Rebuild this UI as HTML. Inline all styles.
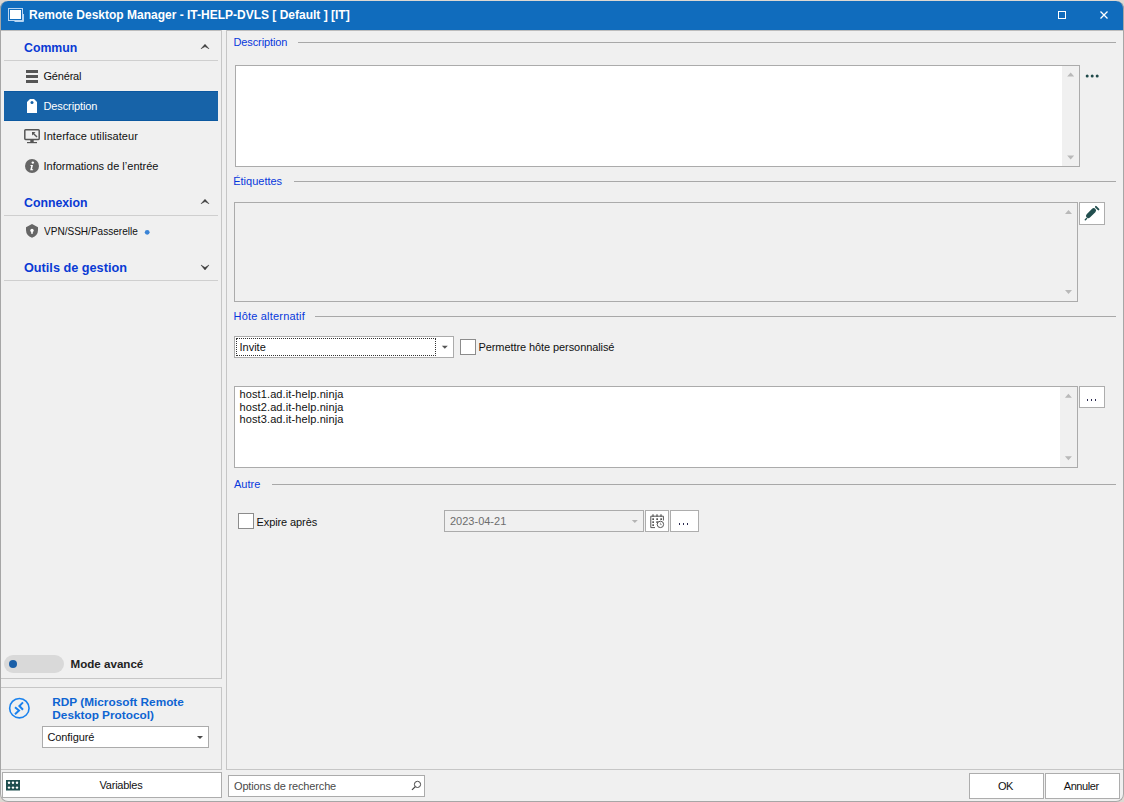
<!DOCTYPE html>
<html><head><meta charset="utf-8">
<style>
*{margin:0;padding:0;box-sizing:border-box}
html,body{width:1124px;height:802px;overflow:hidden;background:#ddd8d2;font-family:"Liberation Sans",sans-serif;font-size:11px;color:#111}
.a{position:absolute}
.t{position:absolute;white-space:pre;line-height:13px;font-size:11px}
.win{position:absolute;left:0;top:0;width:1124px;height:802px;border-radius:8px;overflow:hidden;background:#f0f0f0;clip-path:inset(1px 0 0 0 round 8px)}
.frame{position:absolute;left:0;top:1px;width:1124px;height:801px;border-radius:8px;border:1px solid #a6a6a6;border-top:none}
.hl{position:absolute;height:1px;background:#c6c6c6}
.vl{position:absolute;width:1px;background:#c6c6c6}
.box{position:absolute;border:1px solid #ababab;background:#fff}
.hdr{position:absolute;white-space:pre;font-weight:bold;font-size:12.3px;line-height:14px;color:#0a3ad4}
.sec{position:absolute;white-space:pre;line-height:13px;font-size:11px;color:#0838dc}
.sl{position:absolute;height:1px;background:#a8a8a8}
.btn{position:absolute;border:1px solid #adadad;background:#fff}
svg{position:absolute;overflow:visible}
</style></head><body>
<div class="win">
  <!-- title bar -->
  <div class="a" style="left:0;top:0;width:1124px;height:30px;background:#106cbd"></div>
  <svg style="left:0;top:0" width="40" height="30">
    <rect x="8.5" y="8.5" width="14" height="12" fill="none" stroke="#b9d6f2" stroke-width="1"/>
    <rect x="10" y="10" width="11" height="9" fill="#fff"/>
    <path d="M14.5 21.5 H23.5 V14" fill="none" stroke="#b9d6f2" stroke-width="1"/>
  </svg>
  <div class="t" style="left:29px;top:8px;font-size:12px;font-weight:bold;color:#fff;line-height:14px">Remote Desktop Manager - IT-HELP-DVLS [ Default ] [IT]</div>
  <div class="a" style="left:1058px;top:11px;width:8px;height:8px;border:1px solid #fff"></div>
  <svg style="left:0;top:0" width="1124" height="30">
    <path d="M1100.5 11.5 L1107.5 18.5 M1107.5 11.5 L1100.5 18.5" stroke="#fff" stroke-width="1.3"/>
  </svg>

  <!-- panel borders -->
  <div class="hl" style="left:0;top:30px;width:222px;background:#bdbdbd"></div>
  <div class="hl" style="left:226px;top:30px;width:898px;background:#bdbdbd"></div>
  <div class="vl" style="left:221px;top:30px;height:649px"></div>
  <div class="hl" style="left:0;top:678px;width:222px"></div>
  <div class="hl" style="left:0;top:687px;width:222px"></div>
  <div class="vl" style="left:221px;top:687px;height:83px"></div>
  <div class="hl" style="left:0;top:769px;width:222px"></div>
  <div class="vl" style="left:226px;top:30px;height:740px"></div>
  <div class="hl" style="left:226px;top:769px;width:898px"></div>

  <!-- LEFT NAV -->
  <div class="hdr" style="left:24px;top:41px">Commun</div>
  <svg style="left:0;top:0" width="222" height="300">
    <path d="M201 48.8 L205 44.3 L209 48.8 L205 46.6 Z" fill="#3a3a3a" stroke="#3a3a3a" stroke-width="0.5" stroke-linejoin="round"/>
    <path d="M201 203.8 L205 199.3 L209 203.8 L205 201.6 Z" fill="#3a3a3a" stroke="#3a3a3a" stroke-width="0.5" stroke-linejoin="round"/>
    <path d="M201 265 L205 270 L209 265 L205 267.6 Z" fill="#3a3a3a" stroke="#3a3a3a" stroke-width="0.5" stroke-linejoin="round"/>
  </svg>
  <div class="hl" style="left:4px;top:60px;width:214px;background:#cfcfcf"></div>
  <!-- General -->
  <div class="a" style="left:26px;top:70px;width:12px;height:3px;background:#555"></div>
  <div class="a" style="left:26px;top:75px;width:12px;height:3px;background:#555"></div>
  <div class="a" style="left:26px;top:80px;width:12px;height:3px;background:#555"></div>
  <div class="t" style="left:43.5px;top:70px;letter-spacing:-0.19px">Général</div>
  <!-- Description selected -->
  <div class="a" style="left:4px;top:91px;width:214px;height:30px;background:#1763a8;border-top:1px solid #0c58a0;border-bottom:1px solid #0c58a0"></div>
  <svg style="left:0;top:0" width="60" height="130">
    <path d="M27 102 L30 99 L34 99 L37 102 L37 113 L27 113 Z" fill="#fff"/>
    <circle cx="32" cy="102.5" r="1.5" fill="#1763a8"/>
  </svg>
  <div class="t" style="left:43.5px;top:100px;color:#fff;letter-spacing:-0.11px">Description</div>
  <!-- Interface -->
  <svg style="left:0;top:0" width="60" height="150">
    <rect x="24.8" y="129.8" width="14.4" height="9.6" rx="0.8" fill="none" stroke="#555" stroke-width="1.5"/>
    <rect x="30.3" y="139.5" width="3.4" height="2.8" fill="#555"/>
    <rect x="27" y="142" width="10" height="1.2" fill="#555"/>
    <path d="M32.4 132.4 L37 137" stroke="#555" stroke-width="1.4"/>
    <path d="M32 132 L35.5 132 L32 135.5 Z" fill="#555"/>
  </svg>
  <div class="t" style="left:43.5px;top:130px;letter-spacing:0.07px">Interface utilisateur</div>
  <!-- Info -->
  <svg style="left:0;top:0" width="60" height="180">
    <circle cx="32" cy="166" r="7" fill="#666"/>
    <circle cx="32.8" cy="162.6" r="1.2" fill="#fff"/>
    <path d="M30.6 165 L33 165 L32 169.2 L33.2 169.2 L33 170.2 L30.2 170.2 L31.2 166 L30.4 166 Z" fill="#fff"/>
  </svg>
  <div class="t" style="left:43.5px;top:160px">Informations de l’entrée</div>

  <div class="hdr" style="left:24px;top:196px">Connexion</div>
  <div class="hl" style="left:4px;top:215px;width:214px;background:#cfcfcf"></div>
  <svg style="left:0;top:0" width="160" height="250">
    <path d="M32 224 L38 227.3 L38 230 Q38 235.5 32 237.8 Q26 235.5 26 230 L26 227.3 Z" fill="#666"/>
    <circle cx="32" cy="230.4" r="1.7" fill="#fff"/>
    <rect x="31.2" y="231" width="1.6" height="2.8" fill="#fff"/>
    <circle cx="147.2" cy="232.3" r="2.4" fill="#3a84d6"/>
  </svg>
  <div class="t" style="left:43.7px;top:225px;transform:scaleX(0.913);transform-origin:0 0">VPN/SSH/Passerelle</div>

  <div class="hdr" style="left:24px;top:261px;font-size:12.7px">Outils de gestion</div>
  <div class="hl" style="left:4px;top:280px;width:214px;background:#cfcfcf"></div>

  <!-- Mode avance -->
  <div class="a" style="left:4px;top:655px;width:60px;height:18px;border-radius:9px;background:#d9d9d9"></div>
  <div class="a" style="left:9px;top:660px;width:8px;height:8px;border-radius:4px;background:#1a5fa8"></div>
  <div class="t" style="left:70.5px;top:657px;font-weight:bold;font-size:11.6px;line-height:14px;color:#222">Mode avancé</div>

  <!-- RDP -->
  <svg style="left:0;top:0" width="60" height="730">
    <circle cx="19.35" cy="708.2" r="9.7" fill="none" stroke="#1a82ee" stroke-width="1.6"/>
    <path d="M15 707.2 L19 710.6 L15 714.2" fill="none" stroke="#1a82ee" stroke-width="2"/>
    <path d="M23 702.4 L19.4 706 L23 709.8" fill="none" stroke="#1a82ee" stroke-width="2"/>
  </svg>
  <div class="t" style="left:52.3px;top:696px;font-weight:bold;font-size:11.8px;color:#0e64d2">RDP (Microsoft Remote</div>
  <div class="t" style="left:52.3px;top:709px;font-weight:bold;font-size:11.8px;color:#0e64d2">Desktop Protocol)</div>
  <div class="box" style="left:42px;top:726px;width:167px;height:22px"></div>
  <div class="t" style="left:47.4px;top:731px;letter-spacing:-0.08px">Configuré</div>
  <svg style="left:0;top:0" width="222" height="760">
    <path d="M197 736 L203 736 L200 739 Z" fill="#4a4a4a"/>
  </svg>

  <!-- Variables -->
  <div class="btn" style="left:2px;top:772px;width:220px;height:26px"></div>
  <svg style="left:0;top:0" width="30" height="800">
    <rect x="6" y="780" width="14" height="10.5" fill="#1f4f4f"/>
    <circle cx="9" cy="782.8" r="1.2" fill="#fff"/><circle cx="13" cy="782.8" r="1.2" fill="#fff"/><circle cx="17" cy="782.8" r="1.2" fill="#fff"/>
    <circle cx="9" cy="787.6" r="1.2" fill="#fff"/><circle cx="13" cy="787.6" r="1.2" fill="#fff"/><circle cx="17" cy="787.6" r="1.2" fill="#fff"/>
  </svg>
  <div class="t" style="left:99.6px;top:779px;letter-spacing:-0.25px">Variables</div>

  <!-- RIGHT PANEL -->
  <div class="sec" style="left:233.5px;top:36px;letter-spacing:-0.11px">Description</div>
  <div class="sl" style="left:298px;top:42px;width:818px"></div>
  <div class="box" style="left:235px;top:65px;width:845px;height:102px"></div>
  <div class="a" style="left:1062px;top:66px;width:17px;height:100px;background:#f0f0f0"></div>
  <svg style="left:0;top:0" width="1124" height="500">
    <path d="M1067.2 76.4 L1074.2 76.4 L1070.7 72.4 Z" fill="#b9b9b9"/>
    <path d="M1067.2 155.6 L1074.2 155.6 L1070.7 159.6 Z" fill="#b9b9b9"/>
    <circle cx="1087.2" cy="76" r="1.5" fill="#1f4a4a"/><circle cx="1092.2" cy="76" r="1.5" fill="#1f4a4a"/><circle cx="1097.2" cy="76" r="1.5" fill="#1f4a4a"/>
  </svg>

  <div class="sec" style="left:233.2px;top:175px">Étiquettes</div>
  <div class="sl" style="left:294px;top:181px;width:822px"></div>
  <div class="box" style="left:234px;top:202px;width:844px;height:100px;background:#f0f0f0"></div>
  <svg style="left:0;top:0" width="1124" height="500">
    <path d="M1065 214 L1072 214 L1068.5 210 Z" fill="#b9b9b9"/>
    <path d="M1065 290 L1072 290 L1068.5 294 Z" fill="#b9b9b9"/>
  </svg>
  <div class="btn" style="left:1079px;top:202px;width:26px;height:23px"></div>
  <svg style="left:0;top:0" width="1124" height="500">
    <path d="M1088.3 215.9 L1093.7 210.5" stroke="#234f4f" stroke-width="4.6" stroke-linecap="round"/>
    <path d="M1095.9 206.9 L1098.4 209.4" stroke="#234f4f" stroke-width="2" stroke-linecap="round"/>
    <path d="M1085.3 219.7 L1086.6 218.4" stroke="#234f4f" stroke-width="1.4" stroke-linecap="round"/>
  </svg>

  <div class="sec" style="left:233.5px;top:310px;letter-spacing:0.2px">Hôte alternatif</div>
  <div class="sl" style="left:315px;top:316px;width:801px"></div>
  <div class="box" style="left:234px;top:336px;width:220px;height:22px"></div>
  <div class="a" style="left:236px;top:338px;width:200px;height:18px;border:1px dotted #333"></div>
  <div class="t" style="left:239.5px;top:341px">Invite</div>
  <svg style="left:0;top:0" width="1124" height="500">
    <path d="M441.8 345.8 L447.8 345.8 L444.8 348.8 Z" fill="#555"/>
  </svg>
  <div class="box" style="left:460px;top:339px;width:16px;height:16px;border-color:#8c8c8c"></div>
  <div class="t" style="left:478.5px;top:341px;letter-spacing:-0.085px">Permettre hôte personnalisé</div>

  <div class="box" style="left:234px;top:386px;width:844px;height:82px"></div>
  <div class="a" style="left:1060px;top:387px;width:17px;height:80px;background:#f0f0f0"></div>
  <svg style="left:0;top:0" width="1124" height="500">
    <path d="M1064.9 397.7 L1071.9 397.7 L1068.4 393.7 Z" fill="#b9b9b9"/>
    <path d="M1064.9 456.3 L1071.9 456.3 L1068.4 460.3 Z" fill="#b9b9b9"/>
  </svg>
  <div class="t" style="left:239.5px;top:387.5px;letter-spacing:0.11px">host1.ad.it-help.ninja</div>
  <div class="t" style="left:239.5px;top:400.5px;letter-spacing:0.11px">host2.ad.it-help.ninja</div>
  <div class="t" style="left:239.5px;top:413px;letter-spacing:0.11px">host3.ad.it-help.ninja</div>
  <div class="btn" style="left:1079px;top:386px;width:26px;height:22px"></div>
  <svg style="left:0;top:0" width="1124" height="500">
    <rect x="1087" y="399" width="1" height="2" fill="#2a2a50"/>
    <rect x="1091" y="399" width="1" height="2" fill="#2a2a50"/>
    <rect x="1095" y="399" width="1" height="2" fill="#2a2a50"/>
  </svg>

  <div class="sec" style="left:234px;top:478px">Autre</div>
  <div class="sl" style="left:272px;top:484px;width:844px"></div>
  <div class="box" style="left:238px;top:513px;width:16px;height:16px;border-color:#8c8c8c"></div>
  <div class="t" style="left:256.5px;top:516px;letter-spacing:-0.1px">Expire après</div>
  <div class="box" style="left:444px;top:510px;width:200px;height:22px;background:#f0f0f0"></div>
  <div class="t" style="left:450px;top:515px;color:#6d6d6d">2023-04-21</div>
  <svg style="left:0;top:0" width="1124" height="560">
    <path d="M631.8 520 L637.8 520 L634.8 523 Z" fill="#b4b4b4"/>
  </svg>
  <div class="btn" style="left:645px;top:510px;width:24px;height:22px"></div>
  <svg style="left:0;top:0" width="1124" height="560">
    <path d="M655 527.6 L650.8 527.6 L650.8 516.2 L663.4 516.2 L663.4 520.5" fill="none" stroke="#555" stroke-width="1"/>
    <rect x="652.4" y="514.3" width="1.2" height="2.5" fill="#555"/><rect x="656.4" y="514.3" width="1.2" height="2.5" fill="#555"/><rect x="660.4" y="514.3" width="1.2" height="2.5" fill="#555"/>
    <rect x="652.3" y="518.3" width="1.7" height="1.7" fill="#555"/><rect x="656.3" y="518.3" width="1.7" height="1.7" fill="#555"/><rect x="660.3" y="518.3" width="1.7" height="1.7" fill="#555"/>
    <rect x="652.3" y="521.3" width="1.7" height="1.7" fill="#555"/><rect x="656.3" y="521.3" width="1.7" height="1.7" fill="#555"/>
    <rect x="652.3" y="524.3" width="1.7" height="1.7" fill="#555"/>
    <circle cx="660.4" cy="524.4" r="3.2" fill="#fff" stroke="#555" stroke-width="1"/>
    <path d="M660.4 522.6 V524.6 H661.8" fill="none" stroke="#777" stroke-width="0.7"/>
  </svg>
  <div class="btn" style="left:670px;top:510px;width:29px;height:22px"></div>
  <svg style="left:0;top:0" width="1124" height="560">
    <rect x="679" y="523" width="1" height="2" fill="#2a2a50"/>
    <rect x="683" y="523" width="1" height="2" fill="#2a2a50"/>
    <rect x="687" y="523" width="1" height="2" fill="#2a2a50"/>
  </svg>

  <!-- bottom bar -->
  <div class="box" style="left:228px;top:775px;width:197px;height:22px"></div>
  <div class="t" style="left:234px;top:779.5px;color:#4a4a4a;letter-spacing:-0.155px">Options de recherche</div>
  <svg style="left:0;top:0" width="1124" height="802">
    <circle cx="417.5" cy="784.4" r="3.1" fill="none" stroke="#444" stroke-width="1"/>
    <path d="M415.3 786.6 L412 789.9" stroke="#444" stroke-width="1.3"/>
  </svg>
  <div class="btn" style="left:969px;top:773px;width:75px;height:26px"></div>
  <div class="t" style="left:968px;top:779.6px;width:75px;text-align:center;letter-spacing:-0.4px">OK</div>
  <div class="btn" style="left:1045px;top:773px;width:75px;height:26px"></div>
  <div class="t" style="left:1043.7px;top:779.6px;width:75px;text-align:center;letter-spacing:-0.43px">Annuler</div>
</div>
<div class="frame"></div>
</body></html>
